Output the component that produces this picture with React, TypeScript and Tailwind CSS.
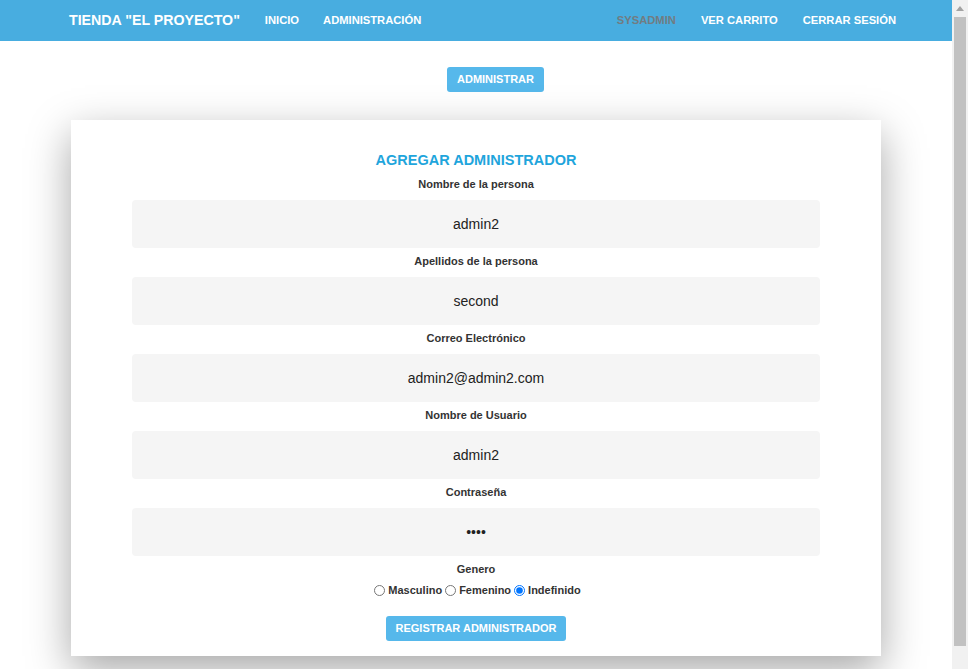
import React from "react";

const fields = [
    { label: "Nombre de la persona", value: "admin2", type: "text" },
    { label: "Apellidos de la persona", value: "second", type: "text" },
    { label: "Correo Electrónico", value: "admin2@admin2.com", type: "text" },
    { label: "Nombre de Usuario", value: "admin2", type: "text" },
    { label: "Contraseña", value: "1234", type: "password" },
];

const genders = [
    { label: "Masculino", checked: false },
    { label: "Femenino", checked: false },
    { label: "Indefinido", checked: true },
];

export default function App() {

    return (

        <div className="flex h-[669px] overflow-hidden bg-white font-['Liberation_Sans',Arial,sans-serif]">

            <div className="w-[952px] flex flex-col">

                <nav className="h-[41px] shrink-0 bg-[#48ade0] flex items-center pl-[69px] pr-[56px] text-white font-bold">

                    <span className="text-[14.2px] leading-none">
                        TIENDA "EL PROYECTO"
                    </span>

                    <a className="ml-[25px] text-[11.2px] leading-none">
                        INICIO
                    </a>

                    <a className="ml-[24px] text-[11.2px] leading-none">
                        ADMINISTRACIÓN
                    </a>

                    <div className="ml-auto flex items-center gap-[25px] text-[11.2px] leading-none">
                        <a className="text-[#727c82]">SYSADMIN</a>
                        <a>VER CARRITO</a>
                        <a>CERRAR SESIÓN</a>
                    </div>

                </nav>

                <div className="flex pt-[26px] pl-[447px]">
                    <button className="h-[25px] w-[97px] rounded-[3px] bg-[#56b8eb] text-white text-[11px] font-bold">
                        ADMINISTRAR
                    </button>
                </div>

                <div className="mx-[71px] mt-[28px] bg-white shadow-[0_14px_40px_rgba(0,0,0,0.35)] pt-[31px] pb-[15px] px-[61px] flex flex-col items-center">

                    <h2 className="text-[14.5px] leading-[18px] font-bold text-[#1fa5dc]">
                        AGREGAR ADMINISTRADOR
                    </h2>

                    <div className="w-full mt-[2px]">

                        {fields.map((f) => (
                            <div key={f.label} className="flex flex-col items-center">

                                <label className="text-[11px] leading-[16px] font-bold text-[#333] mt-[5px]">
                                    {f.label}
                                </label>

                                <input
                                    type={f.type}
                                    defaultValue={f.value}
                                    readOnly
                                    className="mt-[8px] w-full h-[48px] rounded-[4px] bg-[#f5f5f5] text-center text-[14px] text-[#222] outline-none"
                                />

                            </div>
                        ))}

                    </div>

                    <label className="mt-[5px] text-[11px] leading-[16px] font-bold text-[#333]">
                        Genero
                    </label>

                    <div className="mt-[5px] flex items-center h-[16px] text-[11px] font-bold text-[#333]">

                        {genders.map((g) => (
                            <label key={g.label} className="flex items-center">
                                <input
                                    type="radio"
                                    name="genero"
                                    defaultChecked={g.checked}
                                    className="w-[11px] h-[11px] mx-[3px] m-0"
                                />
                                <span>{g.label}</span>
                            </label>
                        ))}

                    </div>

                    <button className="mt-[18px] h-[25px] w-[180px] rounded-[3px] bg-[#56b8eb] text-white text-[11px] font-bold">
                        REGISTRAR ADMINISTRADOR
                    </button>

                </div>

            </div>

            <div className="w-[16px] h-full bg-[#f1f1f1] flex flex-col items-center">

                <div className="h-[17px] flex items-center justify-center">
                    <svg width="8" height="5" viewBox="0 0 8 5">
                        <path d="M4 0 L8 5 L0 5 Z" fill="#a3a3a3" />
                    </svg>
                </div>

                <div className="w-[12px] h-[629px] bg-[#c1c1c1]" />

            </div>

        </div>

    );
}
